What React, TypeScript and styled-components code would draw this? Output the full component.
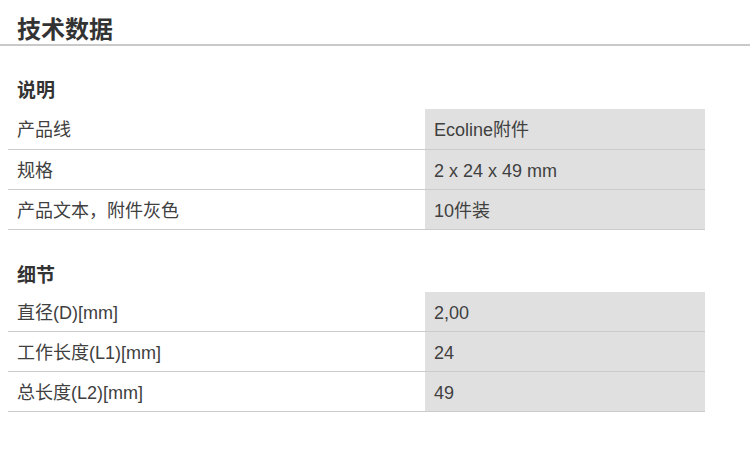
import styled, { createGlobalStyle } from "styled-components";

interface SpecRow {
	label: string;
	value: string;
}

interface SpecSection {
	title: string;
	rows: SpecRow[];
}

const sections: SpecSection[] = [
	{
		title: "说明",
		rows: [
			{ label: "产品线", value: "Ecoline附件" },
			{ label: "规格", value: "2 x 24 x 49 mm" },
			{ label: "产品文本，附件灰色", value: "10件装" },
		],
	},
	{
		title: "细节",
		rows: [
			{ label: "直径(D)[mm]", value: "2,00" },
			{ label: "工作长度(L1)[mm]", value: "24" },
			{ label: "总长度(L2)[mm]", value: "49" },
		],
	},
];

function App() {
	return (
		<>
			<GlobalStyle />
			<Page>
				<Header>
					<Title>技术数据</Title>
				</Header>
				<Content>
					{sections.map((section, idx) => (
						<Section key={section.title} first={idx === 0}>
							<SectionTitle first={idx === 0}>{section.title}</SectionTitle>
							<Table>
								<colgroup>
									<col style={{ width: 417 }} />
									<col style={{ width: 280 }} />
								</colgroup>
								<tbody>
									{section.rows.map((row) => (
										<Row key={row.label}>
											<LabelCell>{row.label}</LabelCell>
											<ValueCell>{row.value}</ValueCell>
										</Row>
									))}
								</tbody>
							</Table>
						</Section>
					))}
				</Content>
			</Page>
		</>
	);
}

export default App;

const GlobalStyle = createGlobalStyle`
	html, body {
		margin: 0;
		padding: 0;
		background: #fff;
	}
	body {
		font-family: "Liberation Sans", "Noto Sans CJK SC", sans-serif;
		color: #404040;
	}
`;

const Page = styled.div`
	width: 750px;
	height: 454px;
	background: #fff;
`;

const Header = styled.header`
	padding: 16px 0 0 17px;
	border-bottom: 2px solid #c9c9c9;
`;

const Title = styled.h1`
	margin: 0;
	font-size: 24px;
	line-height: 28px;
	font-weight: 700;
	color: #333;
`;

const Content = styled.div`
	padding: 0 45px 0 8px;
`;

const Section = styled.section<{ first?: boolean }>`
	margin-top: ${({ first }) => (first ? "33px" : "34px")};
`;

const SectionTitle = styled.h2<{ first?: boolean }>`
	margin: 0 0 ${({ first }) => (first ? "6px" : "4px")} 9px;
	font-size: 19px;
	line-height: 24px;
	font-weight: 700;
	color: #333;
`;

const Table = styled.table`
	width: 697px;
	border-collapse: collapse;
	table-layout: fixed;
`;

const Row = styled.tr`
	height: 40px;
	border-bottom: 1px solid #cbcbcb;
`;

const LabelCell = styled.td`
	box-sizing: border-box;
	padding: 3px 9px 0;
	font-size: 18px;
	line-height: 22px;
	vertical-align: middle;
	color: #404040;
`;

const ValueCell = styled.td`
	box-sizing: border-box;
	padding: 3px 9px 0;
	font-size: 18px;
	line-height: 22px;
	vertical-align: middle;
	background: #e0e0e0;
	color: #404040;
`;
